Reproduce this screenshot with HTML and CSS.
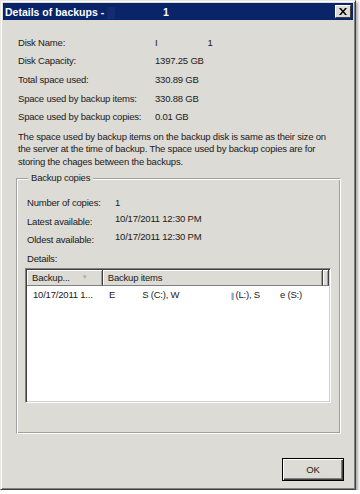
FILE: index.html
```html
<!DOCTYPE html>
<html lang="en">
<head>
  <meta charset="UTF-8" />
  <title>Details of backups</title>
  <link rel="stylesheet" href="styles.css">
</head>
<body>
  <div class="window">
    <div class="titlebar">
      <span class="title">Details of backups - <span class="blur">&#9617;</span></span>
      <span class="title-num">1</span>
      <span class="close">
        <svg width="8" height="7" viewBox="0 0 8 7"><path d="M0 0h2l2 2.5L6 0h2L5 3.5 8 7H6L4 4.5 2 7H0l3-3.5z" fill="#000"/></svg>
      </span>
    </div>

    <div class="content">
      <div class="info">
        <div class="row"><span class="lbl">Disk Name:</span><span class="val">I<span class="gap"></span>1</span></div>
        <div class="row"><span class="lbl">Disk Capacity:</span><span class="val">1397.25 GB</span></div>
        <div class="row"><span class="lbl">Total space used:</span><span class="val">330.89 GB</span></div>
        <div class="row"><span class="lbl">Space used by backup items:</span><span class="val">330.88 GB</span></div>
        <div class="row"><span class="lbl">Space used by backup copies:</span><span class="val">0.01 GB</span></div>
      </div>

      <p class="note">The space used by backup items on the backup disk is same as their size on the server at the time of backup. The space used by backup copies are for storing the chages between the backups.</p>

      <fieldset class="group">
        <legend>Backup copies</legend>
        <div class="row2"><span class="lbl2">Number of copies:</span><span class="val2">1</span></div>
        <div class="row2"><span class="lbl2">Latest available:</span><span class="val2 up">10/17/2011 12:30 PM</span></div>
        <div class="row2"><span class="lbl2">Oldest available:</span><span class="val2 up">10/17/2011 12:30 PM</span></div>
        <div class="row2"><span class="lbl2">Details:</span></div>

        <div class="listview">
          <div class="lv-head">
            <div class="col c1">Backup...<span class="sort">&#9660;</span></div>
            <div class="col c2">Backup items</div>
            <div class="col c3"></div>
          </div>
          <div class="lv-row">
            <span class="cell c1">10/17/2011 1...</span>
            <span class="cell c2">E<span class="sp1"></span>S (C:), W<span class="sp2"></span><span class="smudge">&#9612;</span>(L:), S<span class="sp3"></span>e (S:)</span>
          </div>
        </div>
      </fieldset>

      <div class="buttons">
        <button class="ok">OK</button>
      </div>
    </div>
  </div>
</body>
</html>
```

FILE: styles.css
```css
body {
  margin: 0;
  background: #fff;
  font-family: Tahoma, 'Liberation Sans', Arial, sans-serif;
  font-size: 9.5px;
  letter-spacing: -0.2px;
  color: #1a1a1a;
}
.window {
  width: 356px;
  height: 490px;
  box-sizing: border-box;
  background: #dddbd5;
  border: 1px solid #e8e6e0;
  border-right-color: #404040;
  border-bottom-color: #404040;
  box-shadow: inset 1px 1px 0 #fff, inset -1px -1px 0 #808080, 2px 2px 3px rgba(0,0,0,0.35);
  padding: 2px;
  display: flex;
  flex-direction: column;
}
.titlebar {
  height: 17px;
  background: #0a246a;
  color: #fff;
  font-size: 10.5px;
  letter-spacing: 0;
  font-weight: bold;
  display: flex;
  align-items: center;
  padding-left: 2px;
  white-space: nowrap;
}
.title {
  width: 158px;
}
.blur {
  color: #5a6a96;
  font-weight: normal;
}
.title-num {
  flex: 1;
}
.close {
  width: 14px;
  height: 11px;
  margin-right: 2px;
  background: #dddbd5;
  border: 1px solid #fff;
  border-right-color: #404040;
  border-bottom-color: #404040;
  display: flex;
  align-items: center;
  justify-content: center;
}
.content {
  flex: 1;
  padding: 13px 9px 0 13px;
  display: flex;
  flex-direction: column;
}
.info {
  padding-left: 2px;
}
.row {
  display: flex;
  height: 18.6px;
  align-items: center;
}
.lbl {
  width: 137px;
}
.gap {
  display: inline-block;
  width: 50px;
}
.note {
  margin: 5px 0 4px 2px;
  width: 314px;
  line-height: 12.5px;
}
.group {
  margin: 0 3px 0 0;
  border: 1px solid #a0a0a0;
  border-right-color: #fff;
  border-bottom-color: #fff;
  box-shadow: inset 1px 1px 0 #fff, inset -1px -1px 0 #a0a0a0;
  padding: 9px 9px 30px 8px;
  min-width: 0;
}
.group legend {
  padding: 0 3px;
  margin-left: 3px;
  background: #dddbd5;
  line-height: 12px;
}
.row2 {
  display: flex;
  height: 18.6px;
  align-items: center;
  padding-left: 2px;
}
.lbl2 {
  width: 88px;
}
.up {
  position: relative;
  top: -3px;
}
.listview {
  height: 135px;
  box-sizing: border-box;
  background: #fff;
  border: 1px solid #808080;
  border-right-color: #fff;
  border-bottom-color: #fff;
  box-shadow: inset 1px 1px 0 #404040, inset -1px -1px 0 #d4d0c8;
}
.lv-head {
  display: flex;
  height: 16px;
  margin: 1px 1px 0 1px;
}
.lv-head .col {
  background: #dddbd5;
  box-sizing: border-box;
  border-right: 1px solid #404040;
  border-bottom: 1px solid #808080;
  box-shadow: inset 1px 1px 0 #fff, inset -1px 0 0 #a0a0a0;
  padding-left: 5px;
  display: flex;
  align-items: center;
}
.c1 {
  width: 76px;
}
.c2 {
  width: 221px;
}
.c3 {
  flex: 1;
}
.sort {
  color: #a8a8a8;
  font-size: 6px;
  margin-left: 12px;
}
.lv-row {
  display: flex;
  height: 18px;
  align-items: center;
  padding-left: 1px;
}
.lv-row .cell {
  padding-left: 6px;
  box-sizing: border-box;
  white-space: nowrap;
}
.sp1 { display: inline-block; width: 27px; }
.sp2 { display: inline-block; width: 52px; }
.sp3 { display: inline-block; width: 20px; }
.smudge {
  color: #8fa0d0;
  font-size: 6px;
}
.buttons {
  display: flex;
  justify-content: flex-end;
  margin-top: 24px;
}
.ok {
  width: 62px;
  height: 23px;
  font: inherit;
  letter-spacing: inherit;
  color: #1a1a1a;
  background: #dddbd5;
  border: 1px solid #000;
  box-shadow: inset 1px 1px 0 #fff, inset -1px -1px 0 #404040, inset -2px -2px 0 #808080;
}
```
